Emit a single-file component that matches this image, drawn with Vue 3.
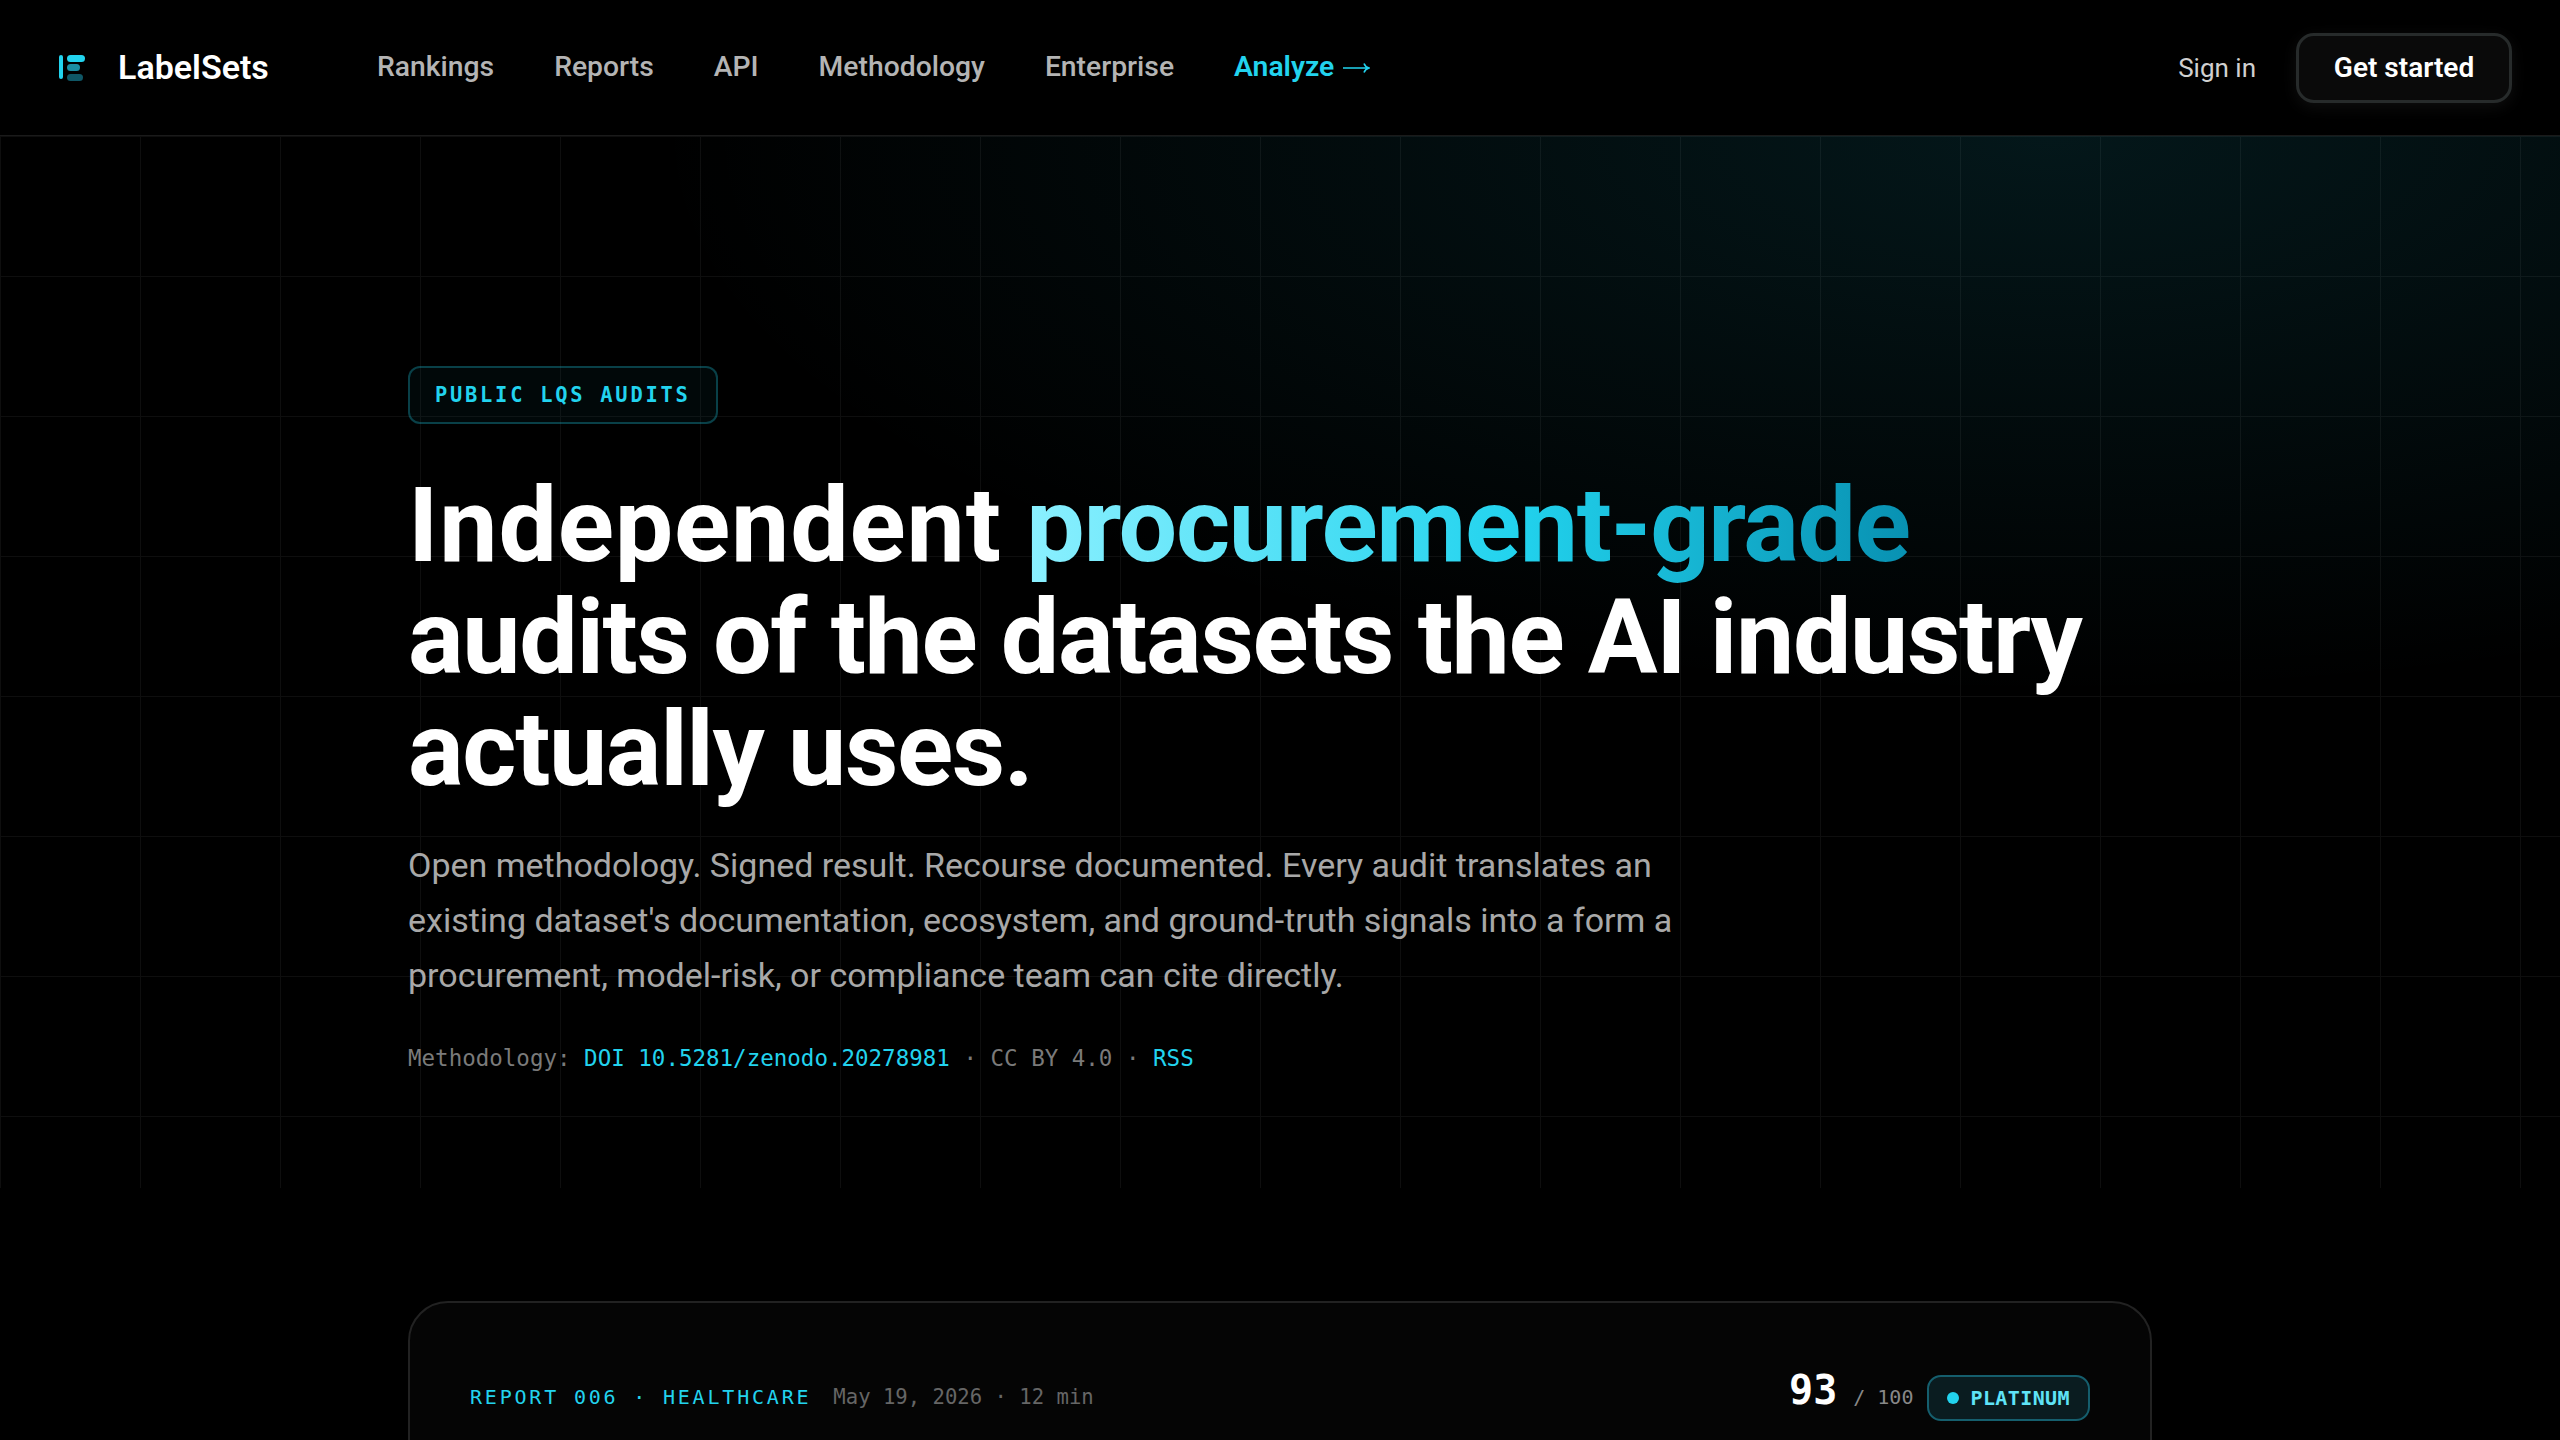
<script setup>
const navLinks = ['Rankings', 'Reports', 'API', 'Methodology', 'Enterprise']
</script>

<template>
  <div class="page">
    <header class="topbar">
      <a class="brand">
        <svg class="brand-mark" width="28" height="28" viewBox="0 0 28 28" aria-hidden="true">
          <rect x="1" y="2" width="4" height="24" rx="2" fill="#22d3ee" />
          <rect x="9" y="2" width="18" height="7" rx="3.5" fill="#22d3ee" />
          <rect x="9" y="11" width="13" height="7" rx="3.5" fill="#1a8ea3" />
          <rect x="9" y="21" width="16" height="7" rx="3.5" fill="#0f5766" />
        </svg>
        <span>LabelSets</span>
      </a>
      <nav class="nav">
        <a v-for="link in navLinks" :key="link">{{ link }}</a>
        <a class="analyze">
          Analyze
          <svg width="27" height="12" viewBox="0 0 27 12" fill="none" stroke="#22d3ee" stroke-width="1.6" aria-hidden="true">
            <path d="M0 6h25.5M21 1.5c.8 2.2 2.4 3.8 5 4.5-2.6.7-4.2 2.3-5 4.5" />
          </svg>
        </a>
      </nav>
      <div class="actions">
        <a class="signin">Sign in</a>
        <button class="cta" type="button">Get started</button>
      </div>
    </header>

    <section class="hero">
      <div class="wrap">
        <span class="pill">PUBLIC LQS AUDITS</span>
        <h1>
          <span class="first">Independent</span> <span class="grad">procurement-grade</span><br />
          audits of the datasets the AI industry<br />
          actually uses.
        </h1>
        <p class="lede">
          Open methodology. Signed result. Recourse documented. Every audit translates an<br />
          existing dataset's documentation, ecosystem, and ground-truth signals into a form a<br />
          procurement, model-risk, or compliance team can cite directly.
        </p>
        <p class="meta">
          Methodology: <a>DOI 10.5281/zenodo.20278981</a> · CC BY 4.0 · <a>RSS</a>
        </p>
      </div>
    </section>

    <main class="wrap reports">
      <article class="card">
        <div class="card-head">
          <div class="card-label">
            <span class="kicker">REPORT 006 · HEALTHCARE</span>
            <span class="date">May 19, 2026 · 12 min</span>
          </div>
          <div class="score">
            <strong>93</strong>
            <span class="outof">/ 100</span>
            <span class="tier"><i class="dot"></i>PLATINUM</span>
          </div>
        </div>
      </article>
    </main>
  </div>
</template>

<style scoped>
.page {
  background: #000;
  color: #fff;
  font-family: Roboto, "Noto Sans", sans-serif;
  min-height: 1440px;
}

.topbar {
  display: flex;
  align-items: center;
  height: 135px;
  padding: 0 48px 0 58px;
  border-bottom: 1px solid #1a1a1a;
  box-sizing: content-box;
}

.brand {
  display: flex;
  align-items: center;
  gap: 32px;
  font-size: 34px;
  font-weight: 600;
  width: 319px;
  margin-top: -2px;
}

.brand-mark {
  flex: none;
}

.nav {
  display: flex;
  gap: 60px;
  font-size: 28.3px;
  font-weight: 500;
  color: #b4b4b4;
  margin-top: -2px;
}

.analyze {
  display: flex;
  align-items: center;
  gap: 9px;
  color: #22d3ee;
  font-weight: 600;
}

.analyze svg {
  margin-top: 3px;
}

.actions {
  margin-left: auto;
  display: flex;
  align-items: center;
  gap: 40px;
}

.signin {
  font-size: 26px;
  color: #d0d0d0;
}

.cta {
  width: 216px;
  height: 70px;
  border: 3px solid #272b2b;
  border-radius: 18px;
  background: #0a0a0a;
  color: #fff;
  font: 600 28px Roboto, sans-serif;
  box-shadow: 0 4px 16px rgba(255, 255, 255, 0.06);
}

.hero {
  height: 1052px;
  box-sizing: border-box;
  padding-top: 230px;
  background:
    radial-gradient(ellipse 1400px 560px at 2050px 0, rgba(34, 211, 238, 0.11), transparent 100%),
    linear-gradient(to right, #0e0e0e 1px, transparent 1px) 0 0 / 140px 140px,
    linear-gradient(to bottom, #0e0e0e 1px, transparent 1px) 0 0 / 140px 140px,
    #000;
}

.wrap {
  width: 1744px;
  margin: 0 auto;
}

.pill {
  display: inline-block;
  padding: 14px 25px;
  border: 2px solid rgba(34, 211, 238, 0.28);
  border-radius: 12px;
  background: rgba(34, 211, 238, 0.04);
  color: #22d3ee;
  font: 700 20.4px/26px "DejaVu Sans Mono", monospace;
  letter-spacing: 0.135em;
}

h1 {
  margin: 46px 0 0;
  font-size: 104px;
  font-weight: 700;
  line-height: 112px;
  letter-spacing: -0.013em;
}

.first {
  letter-spacing: 0.008em;
}

.grad {
  background: linear-gradient(90deg, #8bf0ff 0%, #22d3ee 55%, #0891b2 100%);
  -webkit-background-clip: text;
  background-clip: text;
  color: transparent;
}

.lede {
  margin: 32px 0 0;
  font-size: 34px;
  line-height: 55px;
  color: #a8a8a8;
}

.meta {
  margin: 39px 0 0;
  font: 22.5px/32px "DejaVu Sans Mono", monospace;
  color: #7a7a7a;
}

.meta a {
  color: #22d3ee;
}

.reports {
  padding-top: 113px;
}

.card {
  height: 400px;
  box-sizing: border-box;
  padding: 60px;
  border: 2px solid #222;
  border-radius: 40px;
  background: #050505;
}

.card-head {
  display: flex;
  align-items: baseline;
  justify-content: space-between;
  padding-top: 7px;
}

.card-label {
  display: flex;
  align-items: baseline;
  gap: 22px;
  font-family: "DejaVu Sans Mono", monospace;
}

.kicker {
  font-size: 20px;
  letter-spacing: 0.14em;
  color: #22d3ee;
}

.date {
  font-size: 20.6px;
  color: #666;
}

.score {
  display: flex;
  align-items: baseline;
  font-family: "DejaVu Sans Mono", monospace;
}

.score strong {
  font-size: 40px;
  line-height: 1;
  font-weight: 700;
  margin-right: 16px;
}

.outof {
  font-size: 20px;
  color: #888;
  margin-right: 14px;
}

.tier {
  display: inline-flex;
  align-items: center;
  gap: 11px;
  height: 46px;
  box-sizing: border-box;
  padding: 0 18px;
  border: 2px solid #155e6d;
  border-radius: 14px;
  background: #0a1c20;
  color: #5fe3f7;
  font-size: 20px;
  font-weight: 700;
  letter-spacing: 0.02em;
}

.dot {
  width: 12px;
  height: 12px;
  border-radius: 50%;
  background: #22d3ee;
}
</style>

<style>
html, body {
  background: #000;
  overflow: hidden;
}
</style>
